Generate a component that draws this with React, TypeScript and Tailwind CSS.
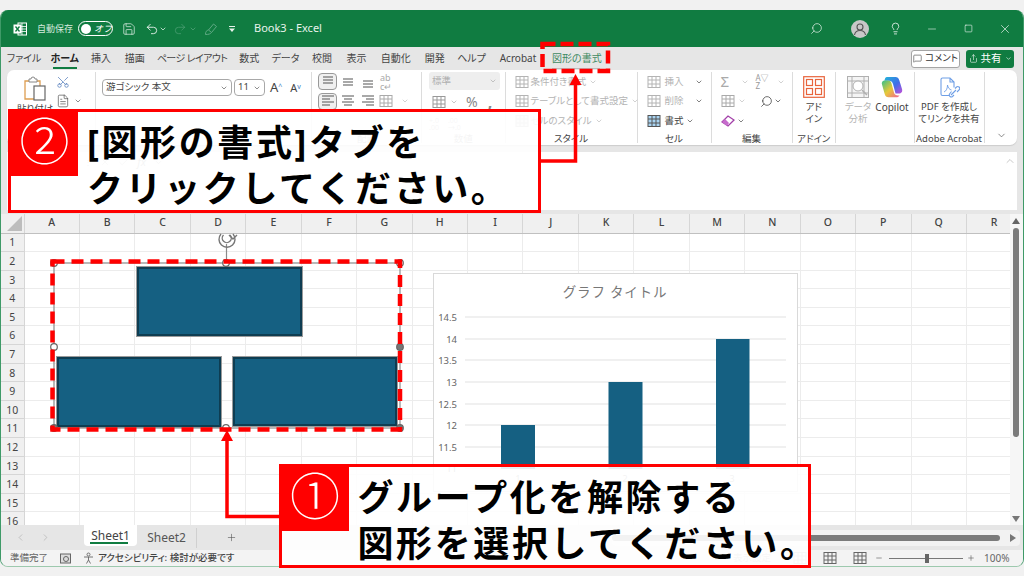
import React from "react";
import { Search, Lightbulb, Minus, Square, X, ChevronDown, ChevronUp, Scissors, Undo2, Redo2, Plus, ChevronLeft, ChevronRight, Check, MessageSquare, Share, FileText, Save } from "lucide-react";

const COLS = ["A","B","C","D","E","F","G","H","I","J","K","L","M","N","O","P","Q","R"];
const ROWS = Array.from({ length: 16 }, (_, i) => i + 1);
const TABS: [string, number][] = [["ファイル",28],["ホーム",24.5],["挿入",19],["描画",19.5],["ページ レイアウト",66],["数式",19.5],["データ",24],["校閲",20],["表示",20],["自動化",29.5],["開発",19.5],["ヘルプ",25],["Acrobat",39]];
const DIS = "#b4b4b4";

function Lines({ kind, c = "#555" }: { kind: string; c?: string }) {
  const rows: Record<string, number[][]> = {
    top: [[3,13,3],[3,13,6],[3,13,9]],
    mid: [[3,13,5],[3,13,8],[3,13,11]],
    bot: [[3,13,7],[3,13,10],[3,13,13]],
    left: [[2,14,3],[2,10,6],[2,14,9],[2,10,12]],
    center: [[2,14,3],[4,12,6],[2,14,9],[4,12,12]],
    right: [[2,14,3],[6,14,6],[2,14,9],[6,14,12]],
  };
  return (
    <svg width="16" height="16" viewBox="0 0 16 16" stroke={c} strokeWidth="1.1">
      {rows[kind].map((r, i) => <line key={i} x1={r[0]} x2={r[1]} y1={r[2]} y2={r[2]} />)}
    </svg>
  );
}

function GridIcon({ c = DIS, accent }: { c?: string; accent?: string }) {
  return (
    <svg width="14" height="14" viewBox="0 0 14 14" fill="none" stroke={c} strokeWidth="1">
      <rect x="1" y="1.5" width="12" height="11" fill={accent ?? "none"} />
      <path d="M1 5h12M1 9h12M5 1.5v11M9 1.5v11" />
    </svg>
  );
}

function Chev({ c = "#777", s = 8 }: { c?: string; s?: number }) {
  return <ChevronDown size={s} color={c} strokeWidth={2} className="shrink-0" />;
}

function Group({ w, label, labelColor = "#555", children, last }: { w: number; label?: string; labelColor?: string; children: React.ReactNode; last?: boolean }) {
  return (
    <div className={`relative flex h-[71px] shrink-0 flex-col ${last ? "" : "border-r border-[#dcdcdc]"}`} style={{ width: w }}>
      <div className="min-h-0 flex-1">{children}</div>
      {label ? <div className="h-[13px] translate-y-[1.5px] text-center text-[9.5px] leading-[13px] whitespace-nowrap" style={{ color: labelColor }}>{label}</div> : null}
    </div>
  );
}

function Row({ children, cls = "" }: { children: React.ReactNode; cls?: string }) {
  return <div className={`flex h-[19.5px] items-center whitespace-nowrap ${cls}`}>{children}</div>;
}

function TitleBar() {
  return (
    <div className="flex h-[37px] shrink-0 items-center bg-[#107c41] text-white">
      <svg width="14" height="14" viewBox="0 0 14 14" className="ml-[12px] shrink-0">
        <rect x="5" y="1" width="8.5" height="12" fill="none" stroke="#fff" strokeWidth="1" />
        <path d="M5 4.5h8.5M5 7h8.5M5 9.5h8.5M9 1v12" stroke="#fff" strokeWidth=".8" />
        <rect x="0.5" y="2.5" width="8" height="9" fill="#fff" />
        <path d="M2.5 4.5l4 5M6.5 4.5l-4 5" stroke="#107c41" strokeWidth="1.3" />
      </svg>
      <span className="ml-[10px] w-[36px] text-[9px] whitespace-nowrap text-[#d7eadf]">自動保存</span>
      <div className="ml-[5px] flex h-[15px] w-[35px] shrink-0 items-center rounded-full border border-white pl-[2px]">
        <span className="h-[10px] w-[10px] rounded-full bg-white" />
        <span className="ml-[3px] text-[9px] italic">オフ</span>
      </div>
      <Save size={14} strokeWidth={1.2} className="ml-[9px] shrink-0 text-[#e8f3ec]" />
      <Undo2 size={14} strokeWidth={1.4} className="ml-[9px] shrink-0 text-white" />
      <Chev c="#fff" />
      <Redo2 size={14} strokeWidth={1} className="ml-[6px] shrink-0 text-[#5fa983]" />
      <span className="ml-[2px]"><Chev c="#5fa983" /></span>
      <svg width="14" height="14" viewBox="0 0 14 14" fill="none" stroke="#5fa983" strokeWidth="1" className="ml-[7px] shrink-0">
        <path d="M1.5 12.5c0-3 1-4 3-4.5l5-6 3 2.5-5 6c-1 1.5-3 2-6 2zM4.5 8l3 2.5" />
      </svg>
      <svg width="8" height="8" viewBox="0 0 8 8" className="ml-[10px] shrink-0" fill="#e8f3ec">
        <rect x="1" y="1" width="6" height="1" />
        <path d="M1 3.5h6L4 7z" />
      </svg>
      <span className="ml-[18px] text-[11px] whitespace-nowrap text-[#e8f3ec]">Book3  -  Excel</span>
      <Search size={13} strokeWidth={1.3} className="ml-auto scale-x-[-1] text-[#e8f3ec]" />
      <div className="ml-[28.5px] flex h-[18px] w-[18px] items-center justify-center rounded-full bg-[#c8c8c8]">
        <svg width="14" height="14" viewBox="0 0 14 14" fill="none" stroke="#555" strokeWidth="1.1">
          <circle cx="7" cy="5" r="3" />
          <path d="M1.5 13c.5-3 2.5-4.5 5.5-4.5s5 1.500 5.500 4.500" />
        </svg>
      </div>
      <Lightbulb size={13} strokeWidth={1.4} className="ml-[19.5px]" />
      <Minus size={12} strokeWidth={1.1} className="ml-[24.5px]" />
      <Square size={9} strokeWidth={1.5} className="ml-[25.5px]" />
      <X size={14} strokeWidth={1.1} className="mr-[11px] ml-[25.5px]" />
    </div>
  );
}

function TabRow() {
  return (
    <div className="flex h-[23px] shrink-0 items-center bg-[#e6e6e6] pl-[9px] text-[10px] text-[#444] [font-feature-settings:'palt']">
      <div className="flex gap-[14.5px]">
        {TABS.map(([t, w]) => (
          <div key={t} className={`relative flex justify-center whitespace-nowrap ${t === "ホーム" ? "font-bold text-[#222]" : ""} ${t === "ページ レイアウト" ? "tracking-[-0.6px]" : ""}`} style={{ width: w }}>
            {t}
            {t === "ホーム" ? <span className="absolute top-[16px] left-0 h-[2px] w-full bg-[#107c41]" /> : null}
          </div>
        ))}
        <div className="relative w-[48px] text-center whitespace-nowrap text-[#3f8a62]">
          図形の書式
          <span className="absolute top-[17px] left-0 h-px w-full bg-[#bcbcbc]" />
        </div>
      </div>
      <div className="ml-auto flex items-center gap-[6px] pr-[9px]">
        <div className="flex h-[18px] w-[49px] items-center justify-center gap-[3px] rounded-[3px] border border-[#a5a5a5] bg-white text-[9.5px] text-[#333]">
          <MessageSquare size={9} strokeWidth={1.5} />コメント
        </div>
        <div className="flex h-[18px] w-[48px] items-center justify-center gap-[3px] rounded-[3px] bg-[#107c41] text-[10.5px] text-white">
          <Share size={9} strokeWidth={1.5} />共有<Chev c="#fff" s={7} />
        </div>
      </div>
    </div>
  );
}

function Ribbon() {
  return (
    <div className="mx-[6px] flex h-[75px] shrink-0 rounded-[7px] bg-white pt-[2px] pb-[2px] text-[9.5px] text-[#444] shadow-[0_1px_1px_#ccc] [font-feature-settings:'palt']">
      <Group w={89}>
        <div className="flex">
          <div className="ml-[12px] flex w-[32px] flex-col items-center pt-[4px]">
            <svg width="24" height="25" viewBox="0 0 24 25" fill="none">
              <path d="M2 5h15v18H2z" stroke="#dd9d50" strokeWidth="1.3" />
              <path d="M6 5V3h2a2 2 0 014 0h2v3H6z" fill="#fff" stroke="#888" strokeWidth="1" />
              <rect x="11" y="10" width="11" height="14" fill="#fff" stroke="#666" strokeWidth="1.200" />
            </svg>
            <span className="mt-[1px] text-[9.5px] whitespace-nowrap">貼り付け</span>
          </div>
          <div className="ml-[1px] flex flex-col pt-[3px]">
            <Scissors size={14} strokeWidth={1.2} className="ml-[4px] rotate-[-90deg] text-[#4a76b8]" />
            <div className="mt-[5px] flex items-center">
              <FileText size={14} strokeWidth={1.1} className="ml-[4px]" />
              <span className="ml-[4px]"><Chev s={8} c="#555" /></span>
            </div>
          </div>
        </div>
      </Group>
      <Group w={216}>
        <div className="flex items-center pt-[7px] pl-[6px]">
          <div className="flex h-[17px] w-[130px] items-center justify-between rounded-[4px] border border-[#a8a8a8] px-[3px] text-[9.5px]">游ゴシック 本文<Chev c="#555" /></div>
          <div className="ml-[2px] flex h-[17px] w-[31px] items-center justify-between rounded-[4px] border border-[#a8a8a8] px-[3px] text-[9.5px]">11<Chev c="#555" /></div>
          <span className="ml-[5px] text-[13px] leading-none">A<sup className="text-[7px] text-[#3b7fc4]">^</sup></span>
          <span className="ml-[8px] text-[11px] leading-none">A<sup className="text-[7px] text-[#3b7fc4]">v</sup></span>
        </div>
      </Group>
      <Group w={110} label="配置" labelColor="#888">
        <div className="pl-[6px]">
          <div className="flex h-[19.5px] items-center">
            <div className="flex h-[17px] w-[19px] items-center justify-center rounded-[4px] border border-[#999] bg-[#f0f0f0]"><Lines kind="top" /></div>
            <span className="ml-[3px]"><Lines kind="mid" /></span>
            <span className="ml-[4px]"><Lines kind="bot" /></span>
            <span className="ml-[4px] text-[9px] leading-[9px] text-[#aaa]">ab<br />c↵</span>
          </div>
          <div className="flex h-[19.5px] items-center">
            <div className="flex h-[17px] w-[19px] items-center justify-center rounded-[4px] border border-[#999] bg-[#f0f0f0]"><Lines kind="left" /></div>
            <span className="ml-[3px]"><Lines kind="center" /></span>
            <span className="ml-[4px]"><Lines kind="right" /></span>
            <span className="ml-[3px]"><GridIcon c="#aaa" /></span>
            <span className="ml-[8px]"><Chev c="#bbb" /></span>
          </div>
        </div>
      </Group>
      <Group w={83.5} label="数値" labelColor="#999">
        <div className="pl-[7px]">
          <div className="flex h-[18px] w-[71px] items-center justify-between rounded-[3px] bg-[#eeeeee] px-[3px] text-[9.5px] text-[#b0b0b0]">標準<Chev c="#aaa" /></div>
          <div className="mt-[3px] flex h-[18px] items-center text-[#888]">
            <span className="ml-[3px]"><GridIcon c="#999" /></span>
            <span className="ml-[4px]"><Chev c="#aaa" /></span>
            <span className="ml-[8px] text-[14px] leading-none">%</span>
            <span className="ml-[10px] text-[16px] font-bold leading-none">,</span>
          </div>
          <div className="mt-[6px] flex gap-[9px] text-[7px] leading-[7px] text-[#aaa]"><span>+.0<br />.00</span><span>.00<br />→.0</span></div>
        </div>
      </Group>
      <Group w={132} label="スタイル" labelColor="#444">
        <div className="pl-[9px] text-[9.5px] text-[#b4b4b4]">
          <Row><span className="mr-[2px]"><GridIcon /></span>条件付き書式<span className="ml-[3px]"><Chev c="#bbb" /></span></Row>
          <Row><span className="mr-[2px]"><GridIcon /></span>テーブルとして書式設定<span className="ml-[3px]"><Chev c="#bbb" /></span></Row>
          <Row><span className="mr-[2px]"><GridIcon accent="#eee" /></span>セルのスタイル<span className="ml-[3px]"><Chev c="#bbb" /></span></Row>
        </div>
      </Group>
      <Group w={74} label="セル" labelColor="#444">
        <div className="pl-[9px] text-[9.5px] text-[#b4b4b4]">
          <Row><span className="mr-[4px]"><GridIcon /></span><span className="w-[30px]">挿入</span><Chev c="#444" /></Row>
          <Row><span className="mr-[4px]"><GridIcon /></span><span className="w-[30px]">削除</span><Chev c="#444" /></Row>
          <Row cls="text-[#444]"><span className="mr-[4px]"><GridIcon c="#555" accent="#a9d4f2" /></span>書式<span className="ml-[2px]"><Chev c="#444" /></span></Row>
        </div>
      </Group>
      <Group w={81} label="編集" labelColor="#444">
        <div className="pl-[9px]">
          <Row><span className="w-[15px] text-[15px] leading-none text-[#aaa]">Σ</span><span className="ml-[5px]"><Chev c="#bbb" /></span><span className="ml-[7px] w-[21px] text-[8px] leading-[8px] text-[#999]">A▽<br />Z</span><Chev c="#bbb" /></Row>
          <Row><GridIcon c="#aaa" /><span className="ml-[3px]"><Chev c="#bbb" /></span><Search size={13} strokeWidth={1.3} className="ml-[14px] scale-x-[-1] text-[#333]" /><span className="ml-[1px]"><Chev c="#333" /></span></Row>
          <Row>
            <svg width="14" height="14" viewBox="0 0 14 14"><path d="M1 8l6-6 6 4-6 6z" fill="#fff" stroke="#a23fa8" strokeWidth="1.300" /><path d="M1 8l3-3 4 4-2 3z" fill="#c66bcc" /></svg>
            <span className="ml-[2px]"><Chev c="#444" /></span>
          </Row>
        </div>
      </Group>
      <Group w={43.5} label="アドイン" labelColor="#444">
        <div className="flex flex-col items-center pt-[4px]">
          <svg width="22" height="22" viewBox="0 0 22 22" fill="none" stroke="#e8643c" strokeWidth="1.200">
            <rect x=".7" y=".7" width="20.6" height="20.6" />
            <rect x="3.500" y="3.500" width="6" height="6" /><rect x="12.500" y="3.500" width="6" height="6" />
            <rect x="3.500" y="12.500" width="6" height="6" /><rect x="12.500" y="12.500" width="6" height="6" />
          </svg>
          <div className="mt-[3px] text-center text-[9.5px] leading-[12px]">アド<br />イン</div>
        </div>
      </Group>
      <Group w={78.5}>
        <div className="flex pt-[4px] pl-[11px]">
          <div className="flex w-[22px] flex-col items-center">
            <svg width="22" height="22" viewBox="0 0 22 22" fill="none" stroke="#b0b0b0" strokeWidth="1">
              <rect x=".5" y=".5" width="21" height="21" fill="#f4f4f4" />
              <path d="M.5 5h21M.5 17h21M5 .5v21M17 .5v21" />
              <circle cx="11" cy="10" r="5" fill="#fff" />
              <path d="M15 14l5 5" strokeWidth="1.500" />
            </svg>
            <div className="mt-[3px] text-center text-[9.5px] leading-[12px] whitespace-nowrap text-[#b4b4b4]">データ<br />分析</div>
          </div>
          <div className="ml-[12px] flex w-[22px] flex-col items-center">
            <svg width="22" height="22" viewBox="0 0 22 22">
              <defs>
                <linearGradient id="cpA" x1="0" y1="0" x2="1" y2="1"><stop offset="0" stopColor="#23b4d8" /><stop offset=".55" stopColor="#3f6ee8" /><stop offset="1" stopColor="#c44fd8" /></linearGradient>
                <linearGradient id="cpB" x1="0" y1="0" x2="1" y2="1"><stop offset="0" stopColor="#34c08a" /><stop offset=".5" stopColor="#e8c838" /><stop offset="1" stopColor="#f0609a" /></linearGradient>
              </defs>
              <path d="M6 1h8.500c2 0 3 1 3.800 3.200L21 13c.8 2.800-.8 4.500-3 4.500h-3.500L12 8c-.7-2.500-2-3.200-4-3.200H3.500C3.800 2.500 4.500 1 6 1z" fill="url(#cpA)" />
              <path d="M1 8.500C.3 6 2 4.500 4 4.500h3.500c1.500 0 2.500 1 3 3l2.500 9c.6 2.200 2 3 4 3h1.500c-.7 1.200-1.700 1.800-3 1.800H7.500c-2 0-3.200-1-3.800-3.200z" fill="url(#cpB)" />
            </svg>
            <div className="mt-[3px] text-[10px] leading-[12px]">Copilot</div>
          </div>
        </div>
      </Group>
      <Group w={70} label="Adobe Acrobat" labelColor="#444">
        <div className="flex flex-col items-center pt-[5px]">
          <svg width="21" height="21" viewBox="0 0 21 21" fill="none" stroke="#6f9fe6" strokeWidth="1.100">
            <path d="M2 2.500A1.500 1.500 0 013.500 1H11l4 4v5.500M2 2.500v14.500A1.500 1.500 0 003.500 18.500H10M11 1v4h4" />
            <path d="M5 15c2.500-1 3.500-4 3.500-7 .5 3 2 4.500 4 5" strokeWidth=".9" />
            <path d="M12 18l5-5M12.500 14.500l-2 2.500a2 2 0 003 2.500l1.500-1.500M16 11.500l1.500-1.500a2 2 0 013 2.500l-2.500 2.500" />
          </svg>
          <div className="mt-[3px] text-center text-[9.5px] leading-[12px] whitespace-nowrap">PDF を作成し<br />てリンクを共有</div>
        </div>
      </Group>
      <Group w={33} last>
        <div className="flex h-full items-end justify-center pb-[2px]"><ChevronDown size={11} strokeWidth={1.500} className="text-[#555]" /></div>
      </Group>
    </div>
  );
}

function FormulaBar() {
  return (
    <div className="mx-[6px] mt-[7px] flex h-[58px] shrink-0 bg-[#fcfcfc]">
      <div className="flex h-[20px] w-[158px] items-center justify-end gap-[8px] pr-[2px] text-[#999]">
        <Chev s={9} c="#aaa" />
        <span className="text-[8px]">⋮</span>
        <X size={10} strokeWidth={1.200} />
        <Check size={11} strokeWidth={1.200} />
        <span className="text-[11px] italic">fx</span>
        <Chev s={9} c="#aaa" />
      </div>
      <div className="flex flex-1 justify-end bg-white pt-[3px] pr-[1px]"><ChevronUp size={12} strokeWidth={1.300} className="text-[#aaa]" /></div>
    </div>
  );
}

function Sheet() {
  return (
    <div className="flex min-h-0 flex-1 flex-col bg-[#e6e6e6] pt-[4px]">
      <div className="flex min-h-0 flex-1">
        <div className="min-w-0 flex-1 overflow-hidden">
          <div className="flex h-[19.5px] border-b border-[#c0c0c0] bg-[#f0f0f0] text-[10.5px] text-[#444]">
            <div className="flex w-[23.5px] shrink-0 items-end justify-end border-r border-[#d6d6d6] p-[2px]">
              <svg width="15" height="15" viewBox="0 0 15 15"><path d="M15 0v15H0z" fill="#bdbdbd" /></svg>
            </div>
            {COLS.map((c) => <div key={c} className="flex w-[55.45px] shrink-0 items-center justify-center border-r border-[#d6d6d6] font-medium">{c}</div>)}
          </div>
          {ROWS.map((r) => (
            <div key={r} className="flex h-[18.6px]">
              <div className="flex w-[23.5px] shrink-0 items-center justify-center border-r border-b border-[#d6d6d6] bg-[#f0f0f0] pt-[2px] text-[10.5px] text-[#444]">{r}</div>
              {COLS.map((c) => <div key={c} className="w-[55.45px] shrink-0 border-r border-b border-[#ececec] bg-white" />)}
            </div>
          ))}
        </div>
        <div className="flex w-[13px] shrink-0 flex-col items-center bg-[#f6f6f6] pt-[4px] pr-[1px]">
          <svg width="8" height="6" viewBox="0 0 8 6" fill="#666"><path d="M4 0l4 6H0z" /></svg>
          <div className="mt-[4px] h-[209px] w-[6px] rounded-full bg-[#7b7b7b]" />
          <svg width="8" height="6" viewBox="0 0 8 6" fill="#777" className="mt-auto mb-[3px]"><path d="M4 6l4-6H0z" /></svg>
        </div>
      </div>
      <div className="flex h-[25px] shrink-0 items-center text-[#555]">
        <ChevronLeft size={11} strokeWidth={1.300} className="ml-[14px] text-[#aaa]" />
        <ChevronRight size={11} strokeWidth={1.300} className="ml-[14px] text-[#aaa]" />
        <div className="relative ml-[33px] flex h-[21px] w-[53px] -translate-y-[2px] items-center justify-center rounded-b-[4px] bg-white text-[12px] leading-none text-[#444]">
          Sheet1
          <span className="absolute bottom-[2px] left-[6px] h-[2px] w-[38px] bg-[#107c41]" />
        </div>
        <div className="flex h-[20px] w-[60px] items-center justify-center border-r border-[#d0d0d0] text-[12px]">Sheet2</div>
        <Plus size={11} strokeWidth={1.300} className="ml-[29px]" />
        <div className="mr-[3px] ml-[375px] flex h-[16px] flex-1 items-center rounded-[4px] bg-[#f2f2f2] pr-[4px]">
          <div className="h-[6px] flex-1 rounded-full bg-[#7b7b7b]" />
          <svg width="6" height="8" viewBox="0 0 6 8" fill="#777" className="ml-[10px]"><path d="M6 4L0 8V0z" /></svg>
        </div>
      </div>
    </div>
  );
}

function StatusBar() {
  return (
    <div className="flex h-[16px] shrink-0 items-center bg-[#f3f3f3] text-[9.500px] text-[#666] [font-feature-settings:'palt']">
      <span className="ml-[9px] w-[36px] whitespace-nowrap">準備完了</span>
      <svg width="11" height="11" viewBox="0 0 11 11" className="ml-[14px] shrink-0" fill="none" stroke="#666"><rect x=".5" y="1" width="10" height="9" fill="#ddd" /><circle cx="6" cy="6" r="2.500" /></svg>
      <svg width="12" height="12" viewBox="0 0 12 12" className="ml-[12px] shrink-0" fill="none" stroke="#666" strokeWidth=".9"><circle cx="5.500" cy="2.500" r="1.500" /><path d="M1 5h9M5.500 5v3l-2 3.500M5.500 8l2 3.500" /></svg>
      <span className="ml-[3px] w-[124px] font-medium whitespace-nowrap text-[#444]">アクセシビリティ: 検討が必要です</span>
      <span className="ml-[511px] w-[36px] whitespace-nowrap text-[#aaa]">表示設定</span>
      <span className="ml-[24px]"><GridIcon c="#aaa" /></span>
      <span className="ml-[16px]"><GridIcon c="#666" /></span>
      <span className="ml-[16px]"><GridIcon c="#666" /></span>
      <Minus size={8} className="ml-[8px] text-[#666]" />
      <div className="relative ml-[6px] h-px w-[74px] bg-[#777]"><span className="absolute top-[-4px] left-[36px] h-[9px] w-[4px] bg-[#666]" /></div>
      <Plus size={8} className="ml-[4px] text-[#666]" />
      <span className="ml-[9px] text-[10px] whitespace-nowrap">100%</span>
    </div>
  );
}

function Callout({ num, l1, l2, cls }: { num: string; l1: string; l2: string; cls: string }) {
  return (
    <div className={`absolute z-30 flex h-[103.500px] w-[532.500px] items-start border-[3px] border-[#ff0000] bg-white/90 ${cls}`}>
      <div className="flex h-[64px] w-[67px] shrink-0 items-center justify-center bg-[#ff0000] pb-[6px] text-[50px] leading-none font-light text-white">{num}</div>
      <div className="pt-[8px] pl-[9px] text-[36px] leading-[45.500px] font-bold tracking-[2.6px] whitespace-nowrap text-black">
        <div>{l1}</div>
        <div>{l2}</div>
      </div>
    </div>
  );
}

function Chart() {
  const ticks: [string, number][] = [["14.5",317],["14",339],["13.5",360],["13",382],["12.5",404],["12",425],["11.5",447],["11",468.500]];
  return (
    <svg width="366" height="220" viewBox="433 273 366 220" className="absolute top-[273px] left-[433px] z-10">
      <rect x="433.500" y="273.500" width="364" height="218" fill="#fff" stroke="#d9d9d9" />
      <text x="615" y="297" textAnchor="middle" fontSize="13.500" fill="#777" letterSpacing=".8">グラフ タイトル</text>
      {ticks.map(([t, y]) => (
        <g key={t}>
          <line x1="465" x2="786" y1={y} y2={y} stroke="#e2e2e2" strokeWidth="1.200" />
          <text x="457" y={y + 3.500} textAnchor="end" fontSize="9.500" fill="#666">{t}</text>
        </g>
      ))}
      <rect x="501" y="425" width="34" height="44" fill="#156082" />
      <rect x="608.500" y="382" width="34" height="87" fill="#156082" />
      <rect x="716" y="339" width="33.500" height="130" fill="#156082" />
      <text x="518" y="482" textAnchor="middle" fontSize="9.500" fill="#888">1</text>
      <text x="625" y="482" textAnchor="middle" fontSize="9.500" fill="#888">2</text>
      <text x="732" y="482" textAnchor="middle" fontSize="9.500" fill="#888">3</text>
    </svg>
  );
}

function Shape({ cls }: { cls: string }) {
  return <div className={`absolute z-10 border-2 border-[#0e3d52] bg-[#156082] outline outline-[#9a9a9a] ${cls}`} />;
}

function Annotations() {
  const handles: [number, number, string][] = [[54,263,"#fff"],[226,263,"#fff"],[400,263,"#fff"],[54,347,"#fff"],[400,347,"#777"],[54,428,"#777"],[226,428,"#fff"],[400,428,"#777"]];
  return (
    <>
      <svg width="1024" height="576" viewBox="0 0 1024 576" fill="none" className="pointer-events-none absolute top-0 left-0 z-20">
        <rect x="54" y="263" width="346" height="165" stroke="#8a8a8a" strokeWidth="1.200" />
        <line x1="226.500" y1="244" x2="226.500" y2="263" stroke="#8a8a8a" strokeWidth="1.200" />
        <path d="M233 234a8 8 0 11-12 0M230 235a4.500 4.500 0 11-6.500 0" stroke="#777" strokeWidth="1.400" />
        <path d="M229 235l4 4 4-4" stroke="#777" strokeWidth="1.400" />
        {handles.map(([x, y, f], i) => <circle key={i} cx={x} cy={y} r="3.300" fill={f} stroke="#666" strokeWidth="1.200" />)}
        <rect x="52.500" y="261.500" width="347.500" height="168" stroke="#ff0000" strokeWidth="4.500" strokeDasharray="12 7" />
        <rect x="542.500" y="44" width="65.500" height="27" stroke="#ff0000" strokeWidth="4.500" strokeDasharray="13 5" />
      </svg>
      <svg width="1024" height="576" viewBox="0 0 1024 576" fill="none" className="pointer-events-none absolute top-0 left-0 z-40">
        <path d="M227 441V516.500H280" stroke="#ff0000" strokeWidth="3.500" />
        <path d="M227 430l6 11h-12z" fill="#ff0000" />
        <path d="M575.500 84V161H538" stroke="#ff0000" strokeWidth="3.500" />
        <path d="M575.500 74l6 11h-12z" fill="#ff0000" />
      </svg>
    </>
  );
}

export default function App() {
  return (
    <div className="relative h-[576px] w-[1024px] overflow-hidden bg-[#f1f1f1] pt-[10px] font-['Noto_Sans','Noto_Sans_CJK_JP',sans-serif]">
      <div className="flex h-[557px] flex-col overflow-hidden rounded-[8px] border-x border-b border-x-[#3f9a68] border-b-[#9dc9ae] bg-[#e6e6e6]">
        <TitleBar />
        <TabRow />
        <Ribbon />
        <FormulaBar />
        <Sheet />
        <StatusBar />
      </div>
      <Chart />
      <Shape cls="top-[267px] left-[137px] h-[69px] w-[165px]" />
      <Shape cls="top-[357px] left-[57px] h-[70px] w-[164px]" />
      <Shape cls="top-[357px] left-[233px] h-[69px] w-[164px]" />
      <Annotations />
      <Callout num="②" l1="[図形の書式]タブを" l2="クリックしてください。" cls="top-[109px] left-[8px]" />
      <Callout num="①" l1="グループ化を解除する" l2="図形を選択してください。" cls="top-[464px] left-[278.500px]" />
    </div>
  );
}
